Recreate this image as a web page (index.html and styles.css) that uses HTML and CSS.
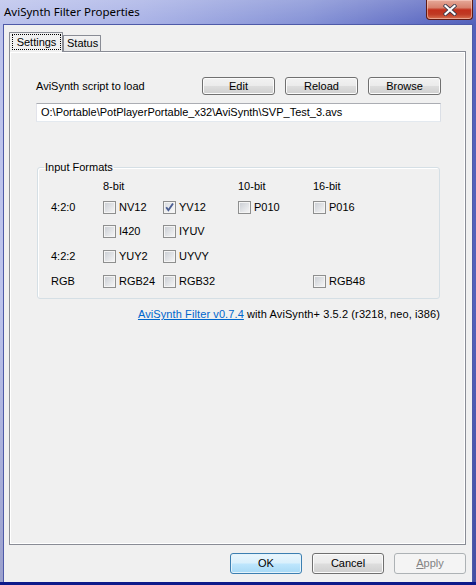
FILE: index.html
```html
<!DOCTYPE html>
<html>
<head>
<meta charset="utf-8">
<link rel="stylesheet" href="styles.css">
</head>
<body>
<div class="window">
  <div class="titlebar">
    <span class="title">AviSynth Filter Properties</span>
    <div class="close">
      <svg width="14" height="12" viewBox="0 0 14 12">
        <path d="M2.5 2 L11.5 10 M11.5 2 L2.5 10" stroke="#3a3a4a" stroke-width="3.8" stroke-linecap="square"/>
        <path d="M2.5 2 L11.5 10 M11.5 2 L2.5 10" stroke="#ffffff" stroke-width="2.2" stroke-linecap="square"/>
      </svg>
    </div>
  </div>
  <div class="client">
    <div class="tabs">
      <div class="tab active"><span class="focus">Settings</span></div>
      <div class="tab">Status</div>
    </div>
    <div class="panel">
      <div class="script-row">
        <span class="label">AviSynth script to load</span>
        <div class="btns">
          <div class="btn">Edit</div>
          <div class="btn">Reload</div>
          <div class="btn">Browse</div>
        </div>
      </div>
      <div class="edit">O:\Portable\PotPlayerPortable_x32\AviSynth\SVP_Test_3.avs</div>
      <fieldset class="group">
        <legend>Input Formats</legend>
        <div class="grid">
          <span></span><span class="hdr">8-bit</span><span></span><span class="hdr">10-bit</span><span class="hdr">16-bit</span>

          <span class="rl">4:2:0</span>
          <span class="ck"><i class="cb"></i>NV12</span>
          <span class="ck"><i class="cb on"><svg width="11" height="11" viewBox="0 0 11 11"><path d="M2.2 5.2 L4.4 8.2 L9 1.5" stroke="#4b5e93" stroke-width="1.9" fill="none"/></svg></i>YV12</span>
          <span class="ck"><i class="cb"></i>P010</span>
          <span class="ck"><i class="cb"></i>P016</span>

          <span></span>
          <span class="ck"><i class="cb"></i>I420</span>
          <span class="ck"><i class="cb"></i>IYUV</span>
          <span></span><span></span>

          <span class="rl">4:2:2</span>
          <span class="ck"><i class="cb"></i>YUY2</span>
          <span class="ck"><i class="cb"></i>UYVY</span>
          <span></span><span></span>

          <span class="rl">RGB</span>
          <span class="ck"><i class="cb"></i>RGB24</span>
          <span class="ck"><i class="cb"></i>RGB32</span>
          <span></span>
          <span class="ck"><i class="cb"></i>RGB48</span>
        </div>
      </fieldset>
      <div class="about"><a class="link">AviSynth Filter v0.7.4</a> with AviSynth+ 3.5.2 (r3218, neo, i386)</div>
    </div>
    <div class="footer">
      <div class="btn big default">OK</div>
      <div class="btn big">Cancel</div>
      <div class="btn big disabled"><u>A</u>pply</div>
    </div>
  </div>
</div>
</body>
</html>
```
FILE: styles.css
```css
* { box-sizing: border-box; }
html, body { margin: 0; padding: 0; background: #ffffff; }
body { width: 476px; height: 585px; overflow: hidden; }

.window {
  width: 476px;
  height: 585px;
  display: flex;
  flex-direction: column;
  padding: 1px 3px 0 3px;
  border-bottom: 3px solid #0d1a8a;
  background:
    linear-gradient(to bottom, rgba(255,255,255,0.18) 0, rgba(255,255,255,0) 24px, rgba(0,0,30,0) 300px, rgba(0,0,60,0.18) 585px),
    linear-gradient(to right, #bcc3ec 0%, #a9b2e6 30%, #8592d6 65%, #5f6cc3 90%, #5361bb 100%);
  font-family: "Liberation Sans", Arial, sans-serif;
  font-size: 11px;
  color: #000;
}

.titlebar {
  height: 23px;
  display: flex;
  align-items: flex-start;
}
.title {
  font-family: "Noto Sans", "Open Sans", sans-serif;
  font-size: 11.5px;
  line-height: 14px;
  padding-top: 4px;
  padding-left: 1px;
  color: #000;
}
.close {
  margin-left: auto;
  margin-top: -1px;
  margin-right: 0;
  width: 47px;
  height: 20px;
  border: 1px solid #5e1a14;
  border-top: none;
  border-radius: 0 0 4px 4px;
  background: linear-gradient(to bottom, #e6a999 0%, #d7826e 40%, #c2301c 52%, #bf3a24 75%, #d7704f 100%);
  box-shadow: inset 0 0 0 1px rgba(255,220,210,0.5);
  display: flex;
  align-items: center;
  justify-content: center;
}

.client {
  flex: 1;
  background: #f0f0f0;
  border: 1px solid #4e5aa8;
  border-bottom: none;
  padding: 7px 0 0 0;
  display: flex;
  flex-direction: column;
}

.tabs {
  display: flex;
  align-items: flex-end;
  height: 19px;
  margin-left: 5px;
  position: relative;
  z-index: 2;
}
.tab {
  height: 16px;
  border: 1px solid #898c95;
  border-bottom: none;
  background: linear-gradient(to bottom, #f3f3f3, #e4e4e4);
  padding: 0 3px;
  line-height: 14px;
  width: 38px;
  text-align: center;
  border-radius: 1px 1px 0 0;
}
.tab.active {
  width: 54px;
  height: 20px;
  margin-bottom: -1px;
  background: #f0f0f0;
  padding: 1px 1px 0 2px;
}
.focus {
  display: block;
  border: 1px dotted #000;
  height: 16px;
  line-height: 14px;
  text-align: center;
}

.panel {
  height: 494px;
  margin: 0 6px 0 5px;
  border: 1px solid #898c95;
  box-shadow: inset 1px 1px 0 #ffffff, inset -1px -1px 0 #ffffff;
  padding: 25px 24px 0 26px;
  display: flex;
  flex-direction: column;
}

.script-row {
  display: flex;
  align-items: center;
  height: 18px;
}
.label { line-height: 13px; }
.btns {
  margin-left: auto;
  display: flex;
  gap: 10px;
}
.btn {
  width: 73px;
  height: 18px;
  border: 1px solid #707070;
  border-radius: 3px;
  background: linear-gradient(to bottom, #f2f2f2 0%, #ebebeb 48%, #dddddd 52%, #cfcfcf 100%);
  box-shadow: inset 0 0 0 1px #fbfbfb;
  text-align: center;
  line-height: 16px;
}

.edit {
  margin-top: 8px;
  height: 19px;
  border: 1px solid;
  border-color: #abadb3 #dbdfe6 #e3e9ef #e2e3ea;
  background: #ffffff;
  padding-left: 4px;
  line-height: 17px;
  white-space: nowrap;
}

.group {
  margin: 39px 1px 0 1px;
  padding: 0 0 5px 0;
  border: 1px solid #d5dfe5;
  border-radius: 3px;
  box-shadow: inset 1px 1px 0 #ffffff;
  min-width: 0;
}
.group legend {
  margin-left: 6px;
  padding: 0 1px;
  line-height: 13px;
}
.grid {
  display: grid;
  grid-template-columns: 52px 60px 75px 75px 1fr;
  grid-template-rows: 17px 24px 25px 25px 24px;
  padding: 4px 0 0 13px;
}
.grid > span {
  display: flex;
  align-items: center;
  line-height: 13px;
}
.grid .hdr { align-items: flex-start; padding-top: 2px; }
.ck { gap: 2px; }
.cb {
  display: inline-flex;
  align-items: center;
  justify-content: center;
  width: 13px;
  height: 13px;
  flex: none;
  border: 1px solid #8e8f8f;
  background: linear-gradient(135deg, #c8ccd2 0%, #e2e4e7 55%, #f7f7f7 100%);
  box-shadow: inset 0 0 0 1px #f4f4f4;
  margin-right: 1px;
}
.cb.on { background: linear-gradient(135deg, #d6d9dd 0%, #eceef0 55%, #fafafa 100%); }

.about {
  margin-top: 9px;
  margin-right: 1px;
  text-align: right;
  line-height: 13px;
  white-space: nowrap;
  letter-spacing: 0.1px;
}
.link {
  color: #0066cc;
  text-decoration: underline;
}

.footer {
  height: 35px;
  display: flex;
  justify-content: flex-end;
  gap: 10px;
  padding: 8px 6px 0 0;
}
.btn.big {
  width: 72px;
  height: 21px;
  line-height: 19px;
}
.btn.default {
  border-color: #3c7fb1;
  background: linear-gradient(to bottom, #eaf6fd 0%, #d9f0fc 48%, #bee6fd 52%, #a7d9f5 100%);
  box-shadow: inset 0 0 0 1px #e4f3fb;
}
.btn.disabled {
  border-color: #adb2b5;
  background: #f4f4f4;
  box-shadow: none;
  color: #838383;
}
.btn.disabled u { text-decoration: underline; }
```
